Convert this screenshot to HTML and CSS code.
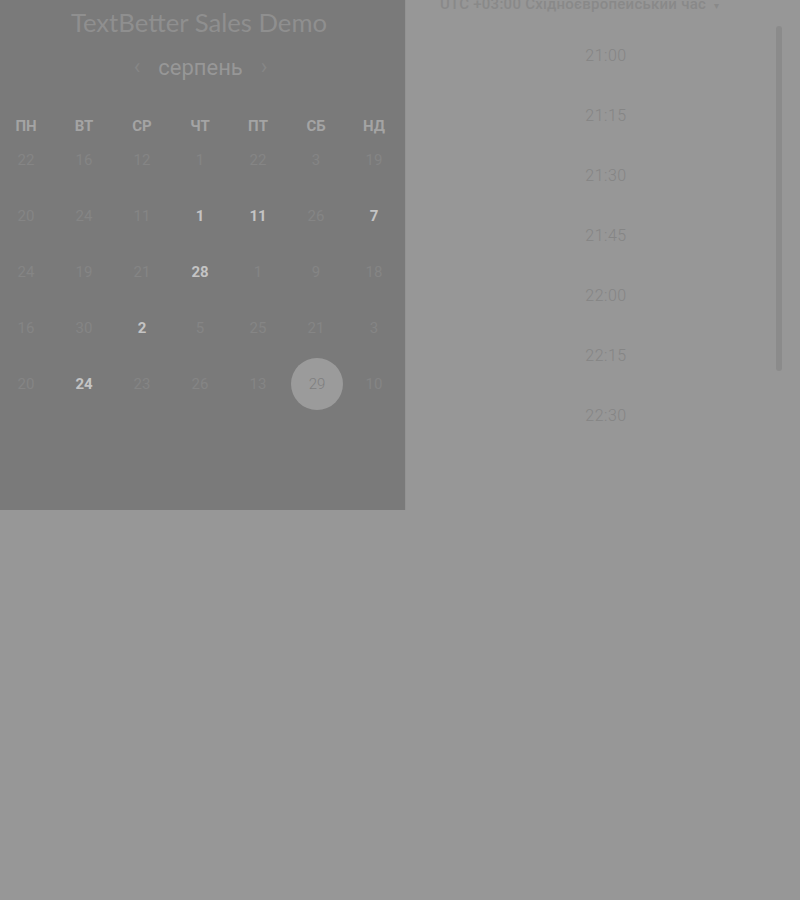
FILE: index.html
```html
<!DOCTYPE html>
<html lang="uk">
<head>
<meta charset="utf-8">
<link rel="stylesheet" href="styles.css">
</head>
<body>
<div class="page">
  <section class="cal">
    <h1 class="title">TextBetter Sales Demo</h1>
    <div class="month">
      <span class="arrow">‹</span>
      <span class="month-name">серпень</span>
      <span class="arrow">›</span>
    </div>
    <div class="grid">
      <div class="wd">ПН</div><div class="wd">ВТ</div><div class="wd">СР</div><div class="wd">ЧТ</div><div class="wd">ПТ</div><div class="wd">СБ</div><div class="wd">НД</div>
      <div class="d">22</div><div class="d">16</div><div class="d">12</div><div class="d">1</div><div class="d">22</div><div class="d">3</div><div class="d">19</div>
      <div class="d">20</div><div class="d">24</div><div class="d">11</div><div class="d on">1</div><div class="d on">11</div><div class="d">26</div><div class="d on">7</div>
      <div class="d">24</div><div class="d">19</div><div class="d">21</div><div class="d on">28</div><div class="d">1</div><div class="d">9</div><div class="d">18</div>
      <div class="d">16</div><div class="d">30</div><div class="d on">2</div><div class="d">5</div><div class="d">25</div><div class="d">21</div><div class="d">3</div>
      <div class="d">20</div><div class="d on">24</div><div class="d">23</div><div class="d">26</div><div class="d">13</div><div class="d sel"><span>29</span></div><div class="d">10</div>
    </div>
  </section>
  <section class="times">
    <div class="tz">UTC +03:00 Східноєвропейський час <span class="caret">▾</span></div>
    <div class="slots">
      <div class="slot">21:00</div>
      <div class="slot">21:15</div>
      <div class="slot">21:30</div>
      <div class="slot">21:45</div>
      <div class="slot">22:00</div>
      <div class="slot">22:15</div>
      <div class="slot">22:30</div>
    </div>
    <div class="scrollbar"></div>
  </section>
</div>
</body>
</html>
```
FILE: styles.css
```css
html, body {
  margin: 0;
  padding: 0;
  background: #979797;
  height: 100%;
}
body {
  font-family: Roboto, "Liberation Sans", sans-serif;
  overflow: hidden;
}
.page {
  display: flex;
  align-items: flex-start;
}
.cal {
  width: 405px;
  height: 510px;
  background: #7a7a7a;
  flex: none;
  box-sizing: border-box;
}
.title {
  margin: 0;
  padding-top: 5px;
  padding-right: 7px;
  text-align: center;
  font-family: Lato, "Noto Sans", sans-serif;
  font-weight: 400;
  font-size: 25.7px;
  line-height: 34px;
  color: #8f8f8f;
}
.month {
  display: flex;
  justify-content: center;
  align-items: center;
  gap: 18px;
  margin-top: 16px;
  height: 24px;
  padding-right: 4px;
}
.month-name {
  font-size: 22px;
  color: #979797;
}
.arrow {
  font-size: 22px;
  color: #868686;
  line-height: 24px;
}
.grid {
  display: grid;
  grid-template-columns: repeat(7, 58px);
  grid-template-rows: 12px;
  grid-auto-rows: 56px;
  margin-left: -3px;
  margin-top: 41px;
}
.wd {
  grid-row: 1;
  display: flex;
  align-items: center;
  justify-content: center;
  font-size: 15px;
  font-weight: 700;
  color: #a4a4a4;
}
.d {
  display: flex;
  align-items: center;
  justify-content: center;
  font-size: 15px;
  color: #858585;
}
.d.on {
  color: #c4c4c4;
  font-weight: 700;
}
.d.sel span {
  width: 52px;
  height: 52px;
  border-radius: 50%;
  background: #9b9b9b;
  color: #7f7f7f;
  display: flex;
  align-items: center;
  justify-content: center;
  font-weight: 300;
  margin-left: 2px;
}
.times {
  position: relative;
  flex: 1;
  height: 510px;
  border-left: 1px solid #929292;
}
.tz {
  margin-top: -5px;
  padding-left: 34px;
  font-size: 15px;
  font-weight: 500;
  letter-spacing: 0.25px;
  color: #898989;
  line-height: 18px;
}
.caret {
  font-size: 10px;
  margin-left: 4px;
}
.slots {
  display: flex;
  flex-direction: column;
  align-items: center;
  margin-top: 33px;
}
.slot {
  height: 60px;
  line-height: 16px;
  font-size: 16px;
  font-weight: 300;
  color: #858585;
  letter-spacing: 0.5px;
  padding-left: 6px;
}
.scrollbar {
  position: absolute;
  right: 18px;
  top: 26px;
  width: 6px;
  height: 345px;
  border-radius: 3px;
  background: #8b8b8b;
}
```
